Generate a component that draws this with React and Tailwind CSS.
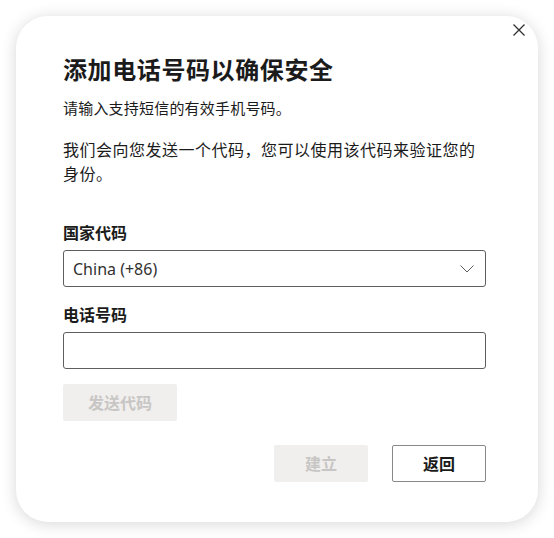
import React from "react";

const font = "font-['Segoe_UI','Noto_Sans','Noto_Sans_CJK_SC',sans-serif]";

export default function App() {
  return (
    <div className={`w-full h-[538px] bg-white pt-4 pl-4 ${font}`}>
      <div className="relative w-[522px] h-[506px] rounded-[32px] bg-white shadow-[0_2px_16px_rgba(0,0,0,0.16)] pl-[47px] pt-[38px]">
        {/* close */}
        <button className="absolute right-[13px] top-[8px] w-3 h-3 text-[#323130]">
          <svg viewBox="0 0 12 12" className="w-3 h-3" fill="none" stroke="currentColor" strokeWidth="1.3">
            <path d="M0.5 0.5 L11.5 11.5 M11.5 0.5 L0.5 11.5" />
          </svg>
        </button>

        <div className="w-[423px] text-[#1b1b1b]">
          <h1 className="text-[24px] leading-[32px] font-bold tracking-[0.6px]">添加电话号码以确保安全</h1>
          <p className="mt-3 text-[15px] leading-[20px] tracking-[0.2px]">请输入支持短信的有效手机号码。</p>
          <p className="mt-5 text-[16px] leading-[24px] tracking-[0.5px]">
            我们会向您发送一个代码，您可以使用该代码来验证您的
            <br />
            身份。
          </p>

          <label className="block mt-9 text-[16px] leading-[22px] font-bold">国家代码</label>
          <div className="mt-1.5 h-[37px] border border-[#605e5c] rounded-[3px] flex items-center justify-between pl-[9px] pr-[11px]">
            <span className="text-[16px] text-[#323130]">China (+86)</span>
            <svg viewBox="0 0 14 8" className="w-[14px] h-2" fill="none" stroke="#605e5c" strokeWidth="1">
              <path d="M0.5 0.5 L7 7 L13.5 0.5" />
            </svg>
          </div>

          <label className="block mt-[17px] text-[16px] leading-[22px] font-bold">电话号码</label>
          <input className="mt-1.5 w-full h-[37px] border border-[#605e5c] rounded-[3px] outline-none px-[10px] text-[15px]" />

          <button className="mt-[15px] w-[114px] h-[37px] bg-[#f0efee] text-[#c8c6c4] text-[16px] font-bold rounded-[2px]">
            发送代码
          </button>

          <div className="mt-6 flex justify-end gap-6">
            <button className="w-[94px] h-[37px] bg-[#f0efee] text-[#c8c6c4] text-[16px] font-bold rounded-[2px]">
              建立
            </button>
            <button className="w-[94px] h-[37px] bg-white border border-[#8a8886] text-[#1b1b1b] text-[16px] font-bold rounded-[2px]">
              返回
            </button>
          </div>
        </div>
      </div>
    </div>
  );
}
